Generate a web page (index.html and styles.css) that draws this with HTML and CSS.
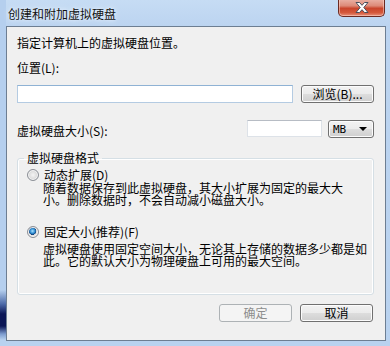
FILE: index.html
```html
<!DOCTYPE html>
<html lang="zh-CN">
<head>
    <meta charset="UTF-8">
    <meta name="viewport" content="width=device-width, initial-scale=1.0">
    <title>创建和附加虚拟硬盘</title>
    <link rel="stylesheet" href="styles.css">
</head>
<body>
    <div class="window">
        <div class="titlebar">
            <span class="title">创建和附加虚拟硬盘</span>
            <button class="close" type="button">
                <svg width="16" height="11" viewBox="0 0 16 11">
                    <path d="M2 0.5 H5.5 L8 3.3 L10.5 0.5 H14 L9.8 5.5 L14 10.5 H10.5 L8 7.7 L5.5 10.5 H2 L6.2 5.5 Z" fill="#ffffff" stroke="#4a4f5c" stroke-width="1"/>
                </svg>
            </button>
        </div>
        <div class="client">
            <p class="intro">指定计算机上的虚拟硬盘位置。</p>
            <div class="field-label">位置(L):</div>
            <div class="row path-row">
                <input class="textbox path" type="text">
                <button class="btn browse" type="button">浏览(B)...</button>
            </div>
            <div class="row size-row">
                <span class="size-label">虚拟硬盘大小(S):</span>
                <input class="textbox size" type="text">
                <div class="combo">
                    <span class="combo-text">MB</span>
                    <span class="combo-arrow"></span>
                </div>
            </div>
            <fieldset class="group">
                <legend>虚拟硬盘格式</legend>
                <div class="option">
                    <span class="radio"></span>
                    <span>动态扩展(D)</span>
                </div>
                <p class="desc">随着数据保存到此虚拟硬盘，其大小扩展为固定的最大大<br>小。删除数据时，不会自动减小磁盘大小。</p>
                <div class="option second">
                    <span class="radio checked"></span>
                    <span>固定大小(推荐)(F)</span>
                </div>
                <p class="desc second-desc">虚拟硬盘使用固定空间大小，无论其上存储的数据多少都是如<br>此。它的默认大小为物理硬盘上可用的最大空间。</p>
            </fieldset>
            <div class="actions">
                <button class="btn disabled" type="button">确定</button>
                <button class="btn" type="button">取消</button>
            </div>
        </div>
    </div>
</body>
</html>
```

FILE: styles.css
```css
* {
    margin: 0;
    padding: 0;
    box-sizing: border-box;
}

body {
    font-family: "Noto Sans CJK SC", "Liberation Sans", sans-serif;
    font-size: 12px;
    color: #000;
    background: #fff;
}

.window {
    width: 390px;
    height: 346px;
    display: flex;
    flex-direction: column;
    padding: 0 4px 5px 6px;
    background:
        linear-gradient(to bottom, #b5cfee 0, #b5cfee 290px, #4d6aa8 304px, #0b1656 314px, #0b1656 326px, #7d9ccf 334px, #b8d2f0 340px) left top / 6px 346px no-repeat,
        linear-gradient(to bottom, #c6dcf4 0, #bcd4f0 26px, #b9d2ef 100%);
}

.titlebar {
    height: 26px;
    display: flex;
    align-items: flex-start;
    justify-content: space-between;
    margin-left: -6px;
    margin-right: -4px;
    padding-left: 8px;
    padding-right: 5px;
}

.title {
    line-height: 14px;
    margin-top: 7px;
    color: #111;
    text-shadow: 0 0 6px #e8f2fc, 0 0 3px #e8f2fc;
}

.close {
    width: 47px;
    height: 18px;
    margin-top: -1px;
    border: 1px solid #6b2a22;
    border-top: none;
    border-radius: 0 0 5px 5px;
    background: linear-gradient(to bottom, #eab3a7 0, #dd8a78 40%, #c9452c 55%, #d4583b 80%, #e8907a 100%);
    box-shadow: inset 0 0 0 1px rgba(255, 220, 210, 0.5);
    display: flex;
    align-items: center;
    justify-content: center;
}

.client {
    flex: 1;
    background: #f0f0f0;
    border: 1px solid #6d7e92;
    padding: 9px 11px 0 10px;
}

.intro {
    line-height: 14px;
}

.field-label {
    line-height: 14px;
    margin-top: 11px;
}

.row {
    display: flex;
}

.path-row {
    margin-top: 10px;
    gap: 8px;
}

.textbox {
    height: 18px;
    background: #fff;
    border: 1px solid #dde2e8;
    border-top-color: #b7bcc4;
    font: inherit;
    outline: none;
}

.textbox.path {
    width: 276px;
    border-color: #b4cbe2;
    border-top-color: #8fb2d4;
}

.btn {
    width: 73px;
    height: 18px;
    font: inherit;
    line-height: 14px;
    color: #000;
    border: 1px solid #707070;
    border-radius: 3px;
    background: linear-gradient(to bottom, #f2f2f2 0, #ebebeb 50%, #dddddd 51%, #cfcfcf 100%);
    box-shadow: inset 0 0 0 1px #fcfcfc;
}

.btn.disabled {
    color: #8d8d8d;
    border-color: #adb2b5;
    background: #f4f4f4;
    box-shadow: none;
}

.size-row {
    margin-top: 17px;
    gap: 6px;
    align-items: flex-start;
}

.size-label {
    flex: 1;
    line-height: 14px;
    margin-top: 4px;
}

.textbox.size {
    width: 75px;
    height: 17px;
}

.combo {
    width: 46px;
    height: 18px;
    display: flex;
    align-items: center;
    justify-content: space-between;
    padding: 0 6px 0 4px;
    border: 1px solid #707070;
    border-radius: 3px;
    background: linear-gradient(to bottom, #f2f2f2 0, #ebebeb 50%, #dddddd 51%, #cfcfcf 100%);
    box-shadow: inset 0 0 0 1px #fcfcfc;
    font-family: "DejaVu Sans Mono", monospace;
    font-size: 11px;
}

.combo-arrow {
    width: 0;
    height: 0;
    border-left: 4px solid transparent;
    border-right: 4px solid transparent;
    border-top: 4px solid #000;
}

.group {
    margin-top: 13px;
    border: 1px solid #d5dfe5;
    border-radius: 3px;
    box-shadow: inset 0 0 0 1px #fff;
    padding: 3px 6px 27px 9px;
}

.group legend {
    line-height: 14px;
    padding: 0 3px;
    margin-left: -3px;
}

.option {
    display: flex;
    align-items: center;
    gap: 5px;
    line-height: 14px;
}

.option.second {
    margin-top: 19px;
}

.radio {
    width: 12px;
    height: 12px;
    border-radius: 50%;
    border: 1px solid #8b8f96;
    background: radial-gradient(circle at 50% 50%, #f4f4f4 0, #dcdcdc 55%, #c3c8ce 100%);
    box-shadow: inset 0 0 0 1px #f6f6f6;
}

.radio.checked {
    background: radial-gradient(circle at 45% 40%, #a9e2ff 0, #2c8ad0 30%, #13427a 45%, #e3e3e3 50%, #d4d6d8 100%);
}

.desc {
    line-height: 12px;
    padding-left: 16px;
    margin-top: 0;
}

.desc.second-desc {
    margin-top: 4px;
}

.actions {
    display: flex;
    justify-content: flex-end;
    gap: 8px;
    margin-top: 9px;
    padding-right: 1px;
}
```
